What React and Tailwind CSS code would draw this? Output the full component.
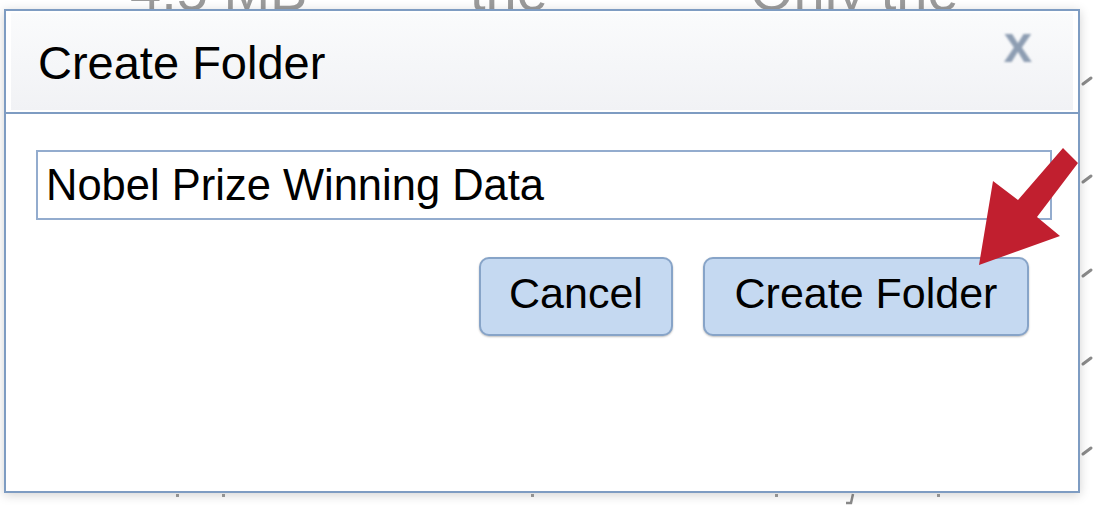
import React from "react";

const BackgroundText = () => {
  return (
    <div className="absolute inset-0 text-[#9b9b9b] text-[56px] leading-none font-['Liberation_Sans',Arial,sans-serif]">
      <span className="absolute left-[130px] top-[-37px]">4.5 MB</span>
      <span className="absolute left-[470px] top-[-37px]">the</span>
      <span className="absolute left-[750px] top-[-37px]">Only the</span>
    </div>
  );
};

const Marks = () => {
  const right = [80, 178, 272, 360, 450];
  const bottom = [176, 222, 531, 775, 937];
  return (
    <svg className="absolute inset-0 pointer-events-none" width="1095" height="508">
      {right.map((y) => (
        <line key={y} x1="1083" y1={y + 4} x2="1091" y2={y - 2} stroke="#8a8a8a" strokeWidth="3" strokeLinecap="round" />
      ))}
      {bottom.map((x) => (
        <rect key={x} x={x} y="494" width="3" height="3" fill="#a0a0a0" />
      ))}
      <path d="M853 494 L851 503 L846 503" stroke="#8a8a8a" strokeWidth="2.5" fill="none" />
    </svg>
  );
};

const Arrow = () => {
  return (
    <svg className="absolute inset-0 pointer-events-none z-20" width="1095" height="508">
      <polygon
        points="1063,148 1078,163 1037,217 1060,236 979,265 993,181 1018,200"
        fill="#c11f2f"
      />
    </svg>
  );
};

const App = () => {
  return (
    <div className="relative w-[1095px] h-[508px] overflow-hidden bg-white font-['Liberation_Sans',Arial,sans-serif]">
      <BackgroundText />
      <Marks />

      <div className="relative z-10 ml-[4px] mt-[9px] w-[1076px] h-[484px] border-2 border-[#7e9cc2] bg-white shadow-[0_2px_10px_rgba(0,0,0,0.18)]">
        <div className="px-[5px] pt-[2px] pb-[2px] border-b-2 border-[#7e9cc2]">
          <div className="flex items-start justify-between h-[97px] pl-[27px] pr-[41px] bg-gradient-to-b from-[#fafbfc] to-[#f1f2f5]">
            <h2 className="mt-[26px] text-[47px] leading-none text-black">Create Folder</h2>
            <span className="mt-[6px] text-[51px] leading-none font-bold text-[#8d9db2] blur-[0.8px]">x</span>
          </div>
        </div>

        <div className="pt-[36px] pl-[30px] pr-[26px]">
          <input
            readOnly
            value="Nobel Prize Winning Data"
            className="block w-full h-[70px] border-2 border-[#93acce] bg-white pl-[8px] text-[43.5px] text-black outline-none font-['Liberation_Sans',Arial,sans-serif]"
          />
        </div>

        <div className="flex justify-end gap-[30px] pt-[37px] pr-[49px]">
          <button className="flex items-center justify-center w-[194px] h-[79px] pb-[7px] rounded-[10px] border-2 border-[#87a4c8] bg-[#c5d9f1] text-[43px] leading-none text-black shadow-[0_1px_2px_rgba(0,0,0,0.25)]">
            Cancel
          </button>
          <button className="flex items-center justify-center w-[326px] h-[79px] pb-[7px] rounded-[10px] border-2 border-[#87a4c8] bg-[#c5d9f1] text-[43px] leading-none text-black shadow-[0_1px_2px_rgba(0,0,0,0.25)]">
            Create Folder
          </button>
        </div>
      </div>

      <Arrow />
    </div>
  );
};

export default App;
